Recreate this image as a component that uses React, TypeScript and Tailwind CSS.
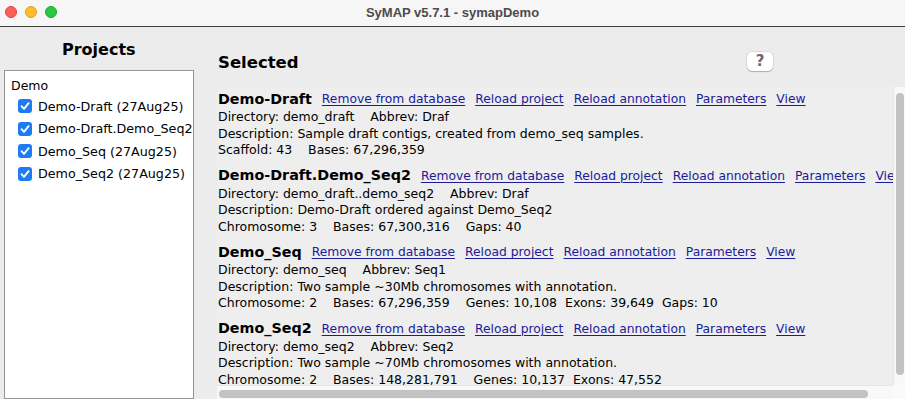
import React from 'react'

interface Project {
  name: string
  lines: string[]
}

const projects: Project[] = [
  {
    name: 'Demo-Draft',
    lines: [
      'Directory: demo_draft    Abbrev: Draf',
      'Description: Sample draft contigs, created from demo_seq samples.',
      'Scaffold: 43    Bases: 67,296,359'
    ]
  },
  {
    name: 'Demo-Draft.Demo_Seq2',
    lines: [
      'Directory: demo_draft..demo_seq2    Abbrev: Draf',
      'Description: Demo-Draft ordered against Demo_Seq2',
      'Chromosome: 3    Bases: 67,300,316    Gaps: 40'
    ]
  },
  {
    name: 'Demo_Seq',
    lines: [
      'Directory: demo_seq    Abbrev: Seq1',
      'Description: Two sample ~30Mb chromosomes with annotation.',
      'Chromosome: 2    Bases: 67,296,359    Genes: 10,108  Exons: 39,649  Gaps: 10'
    ]
  },
  {
    name: 'Demo_Seq2',
    lines: [
      'Directory: demo_seq2    Abbrev: Seq2',
      'Description: Two sample ~70Mb chromosomes with annotation.',
      'Chromosome: 2    Bases: 148,281,791    Genes: 10,137  Exons: 47,552'
    ]
  }
]

const links = ['Remove from database', 'Reload project', 'Reload annotation', 'Parameters', 'View']

const treeItems = ['Demo-Draft (27Aug25)', 'Demo-Draft.Demo_Seq2', 'Demo_Seq (27Aug25)', 'Demo_Seq2 (27Aug25)']

const Checkbox = () => (
  <span className="flex h-[14px] w-[14px] shrink-0 items-center justify-center rounded-[3px] bg-[#1f7bf2]">
    <svg viewBox="0 0 14 14" className="h-[14px] w-[14px]">
      <path d="M3.5 7.2 L6 9.8 L10.6 4.2" fill="none" stroke="white" strokeWidth="1.9" strokeLinecap="round" strokeLinejoin="round" />
    </svg>
  </span>
)

const TitleBar = () => (
  <div className="relative flex h-[27px] shrink-0 items-center justify-center border-b border-[#3f3f3f] bg-[#f6f6f6]">
    <div className="absolute left-[5px] top-[6px] flex gap-[8px]">
      <span className="h-[12px] w-[12px] rounded-full border border-[#e0443e] bg-[#ff5f57]" />
      <span className="h-[12px] w-[12px] rounded-full border border-[#dea123] bg-[#febc2e]" />
      <span className="h-[12px] w-[12px] rounded-full border border-[#1aab29] bg-[#28c840]" />
    </div>
    <span className="font-['Liberation_Sans',Arial,sans-serif] text-[13px] font-bold text-[#4b4b4b]">
      SyMAP v5.7.1 - symapDemo
    </span>
  </div>
)

const ProjectBlock = ({ project }: { project: Project }) => (
  <div className="mb-[8px]">
    <div className="flex h-[19px] w-max items-center gap-[10px] whitespace-nowrap">
      <span className="text-[14.3px] font-bold">{project.name}</span>
      {links.map((link) => (
        <span key={link} className="text-[12.3px] text-[#1c1c96] underline underline-offset-2">
          {link}
        </span>
      ))}
    </div>
    {project.lines.map((line) => (
      <div key={line} className="h-[16.5px] whitespace-pre text-[12.5px] leading-[16.5px]">
        {line}
      </div>
    ))}
  </div>
)

export default function App() {
  return (
    <div className="flex h-[399px] w-[905px] flex-col overflow-hidden bg-[#ececec] font-['DejaVu_Sans',sans-serif] text-black">
      <TitleBar />
      <div className="flex min-h-0 flex-1">
        {/* project tree */}
        <div className="flex w-[217px] shrink-0 flex-col pl-[4px] pr-[23px] pt-[13px]">
          <div className="ml-[58px] h-[20px] text-[16px] font-bold leading-[20px]">Projects</div>
          <div className="mt-[10px] flex-1 border border-[#959595] bg-white pl-[6px] pt-[6px]">
            <div className="text-[12.5px] leading-[18px]">Demo</div>
            <div className="flex flex-col">
              {treeItems.map((item) => (
                <div key={item} className="flex h-[22.5px] items-center gap-[6px] whitespace-nowrap pl-[7px] text-[12.7px]">
                  <Checkbox />
                  <span>{item}</span>
                </div>
              ))}
            </div>
          </div>
        </div>

        {/* selected projects */}
        <div className="flex min-w-0 flex-1 flex-col pt-[25px]">
          <div className="flex w-[556px] items-start justify-between pl-[1px]">
            <span className="h-[22px] text-[16.5px] font-bold leading-[22px]">Selected</span>
            <button
              type="button"
              className="flex h-[19px] w-[26px] items-center justify-center rounded-[5px] bg-white text-[15px] font-bold leading-none text-[#6a6a78] shadow-[0_0_0_0.5px_rgba(0,0,0,0.15),0_1px_1px_rgba(0,0,0,0.2)]"
            >
              ?
            </button>
          </div>
          <div className="mt-[13px] grid min-h-0 flex-1 grid-cols-[1fr_12px] grid-rows-[1fr_14px]">
            <div className="min-w-0 overflow-hidden bg-[#eeeeee] pl-[1px] pt-[3px]">
              {projects.map((project) => (
                <ProjectBlock key={project.name} project={project} />
              ))}
            </div>
            <div className="border-l border-[#e6e6e6] bg-[#f8f8f8] pb-[10px] pl-[2px] pr-[1px] pt-[6px]">
              <div className="h-full w-[8px] rounded-full bg-[#c2c2c2]" />
            </div>
            <div className="flex items-center border-t border-[#e6e6e6] bg-[#f8f8f8] pl-[2px] pr-[25px] pt-[3px]">
              <div className="h-[8px] w-full rounded-full bg-[#c2c2c2]" />
            </div>
            <div className="bg-[#fafafa]" />
          </div>
        </div>
      </div>
    </div>
  )
}
